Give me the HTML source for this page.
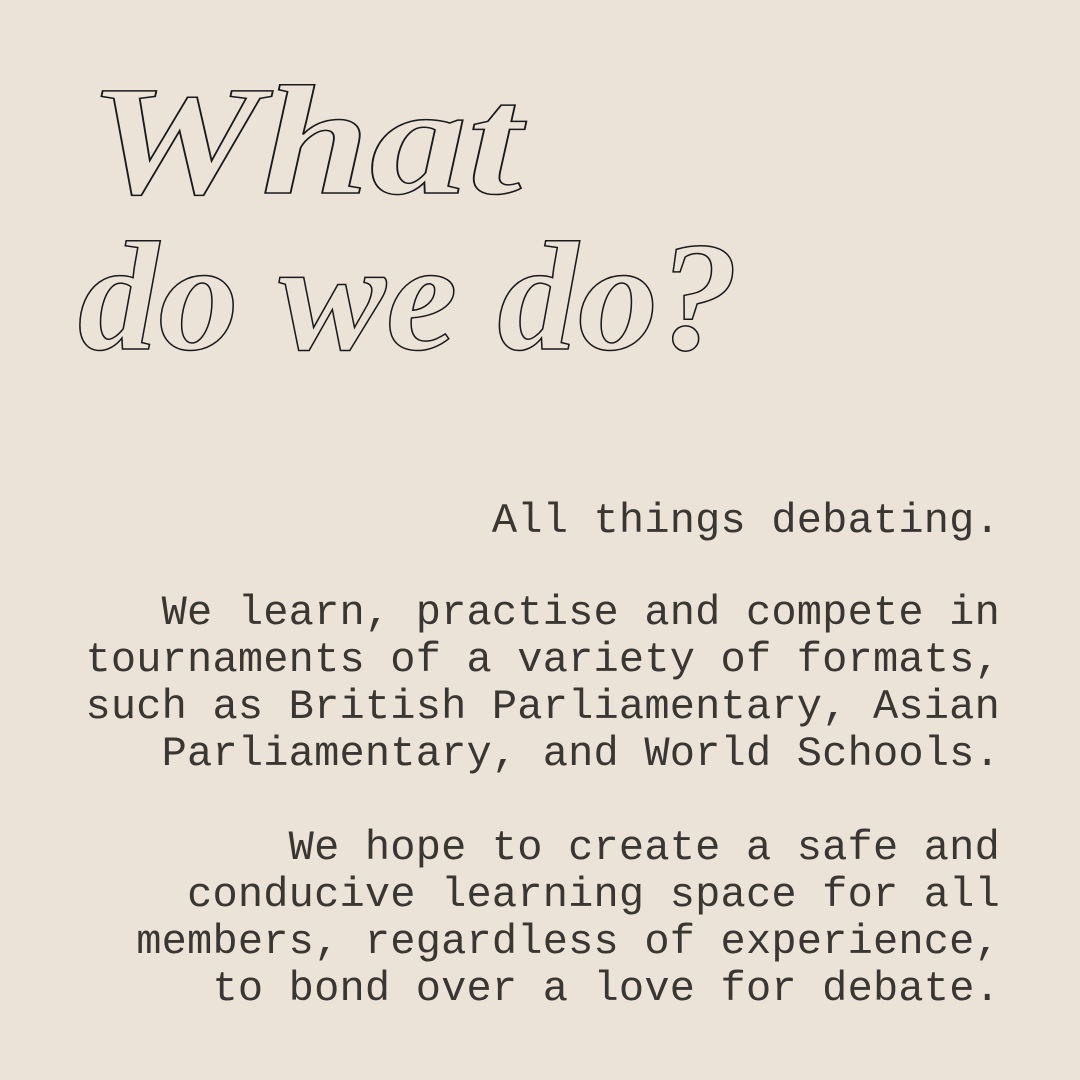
<!DOCTYPE html>
<html><head><meta charset="utf-8"><style>
html,body{margin:0;padding:0}
body{width:1080px;height:1080px;background:#ebe3d7;position:relative;overflow:hidden}
.t{position:absolute;left:0;font-family:"Liberation Serif",serif;font-weight:bold;font-style:italic;font-size:156px;color:transparent;-webkit-text-stroke:1.5px #1a1a1a;line-height:1;white-space:nowrap;transform-origin:0 0}
.b{position:absolute;right:80px;font-family:"Liberation Mono",monospace;font-size:42px;color:#3a3632;text-align:right;white-space:pre;line-height:47px;letter-spacing:0.2px}
</style></head><body>
<div class="t" style="left:88px;top:63px;transform:scaleX(1.25)">What</div>
<div class="t" style="left:78px;top:219px;transform:scaleX(1.03)">do we do?</div>
<div class="b" style="top:498px">All things debating.</div>
<div class="b" style="top:590px">We learn, practise and compete in
tournaments of a variety of formats,
such as British Parliamentary, Asian
Parliamentary, and World Schools.</div>
<div class="b" style="top:825px">We hope to create a safe and
conducive learning space for all
members, regardless of experience,
to bond over a love for debate.</div>
</body></html>
